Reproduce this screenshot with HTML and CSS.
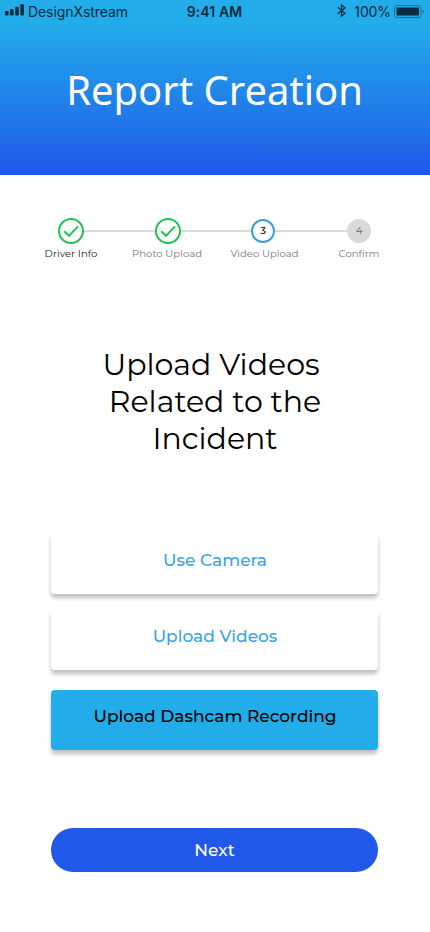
FILE: index.html
```html
<!DOCTYPE html>
<html lang="en">
<head>
<meta charset="utf-8">
<meta name="viewport" content="width=device-width, initial-scale=1">
<title>Report Creation</title>
<link rel="stylesheet" href="styles.css">
</head>
<body>
<header class="hero">
  <div class="status">
    <div class="status-left">
      <svg class="signal" width="20" height="12" viewBox="0 0 20 12"><rect x="0" y="7" width="3.6" height="4.5" rx="1"/><rect x="5" y="5" width="3.6" height="6.5" rx="1"/><rect x="10.2" y="2.8" width="3.6" height="8.7" rx="1"/><rect x="15.4" y="0.3" width="3.6" height="11.2" rx="1"/></svg>
      <span class="carrier">DesignXstream</span>
    </div>
    <span class="clock">9:41 AM</span>
    <div class="status-right">
      <svg class="bluetooth" width="9" height="13" viewBox="0 0 9 13"><path d="M.8 3.3 8 9.3 4.5 12V1L8 3.7.8 9.7"/></svg>
      <span class="percent">100%</span>
      <svg class="battery" width="31" height="13" viewBox="0 0 31 13"><rect class="battery-shell" x=".5" y=".5" width="26.5" height="12" rx="2.5"/><rect x="2.5" y="2.5" width="22.5" height="8" rx=".8"/><path class="battery-tip" d="M28.6 4.5q2.4 2 0 4z"/></svg>
    </div>
  </div>
  <h1 class="title">Report Creation</h1>
</header>
<main class="content">
  <ol class="steps">
    <li class="step current-label"><svg class="check" width="26" height="26" viewBox="0 0 26 26"><circle cx="13" cy="13" r="12"/><path d="m6.2 13.3 4.8 4.5 9-9.4"/></svg><span class="label">Driver Info</span></li>
    <li class="step"><svg class="check check-2" width="26" height="26" viewBox="0 0 26 26"><circle cx="13" cy="13" r="12"/><path d="m6.2 13.3 4.8 4.5 9-9.4"/></svg><span class="label">Photo Upload</span></li>
    <li class="step"><span class="dot active">3</span><span class="label label-3">Video Upload</span></li>
    <li class="step"><span class="dot">4</span><span class="label">Confirm</span></li>
  </ol>
  <h2 class="heading"><span class="line line-1">Upload Videos</span><span class="line">Related to the</span><span class="line">Incident</span></h2>
  <div class="actions">
    <button class="card">Use Camera</button>
    <button class="card">Upload Videos</button>
    <button class="card selected">Upload Dashcam Recording</button>
  </div>
  <button class="next">Next</button>
</main>
</body>
</html>
```
FILE: styles.css
```css
* { box-sizing: border-box; }
body { margin: 0; background: #fff; font-family: Montserrat, Inter, sans-serif; color: #000; }
button { border: 0; padding: 0; font: inherit; }
.hero { height: 175px; background: linear-gradient(#22adea 0, #22adea 12%, #2058e9 100%); }
.status { height: 22px; display: grid; grid-template-columns: 1fr auto 1fr; align-items: center; padding: 1px 5px 0; font: 14px/20px Inter, sans-serif; color: #092b3b; }
.status svg { display: block; fill: currentColor; }
.status-left, .status-right { display: flex; align-items: center; }
.status-left { gap: 3px; }
.carrier { letter-spacing: -.08px; }
.status-right { justify-content: flex-end; }
.signal { margin-top: -4px; }
.clock { font-weight: 600; letter-spacing: .1px; margin-right: 1px; }
.status .bluetooth { fill: none; stroke: currentColor; stroke-width: 1.3; margin: -3px 8px 0 0; }
.percent { margin-right: 3px; letter-spacing: -.1px; }
.status .battery { margin-top: -1px; }
.status .battery-shell { fill: none; stroke: currentColor; opacity: .45; }
.battery-tip { opacity: .45; }
.title { margin: 0; padding: 41px 1px 0 0; text-align: center; font: 400 40px/54px "Noto Sans", sans-serif; letter-spacing: -.04px; color: #fff; }
.content { display: flex; flex-direction: column; align-items: center; }
.steps { list-style: none; margin: 43px 0 0; padding: 0; width: 384px; display: grid; grid-template-columns: repeat(4, 1fr); }
.step { position: relative; display: flex; flex-direction: column; align-items: center; height: 45px; color: #777; }
.step:not(:last-child)::after { content: ""; position: absolute; left: calc(50% + 12px); top: 12px; width: calc(100% - 24px); height: 2px; background: #dadada; }
.current-label { color: #222; }
.check { position: relative; z-index: 1; fill: none; stroke: #21c153; stroke-width: 2; }
.check circle { fill: #fff; }
.check-2 { margin-left: 2px; }
.dot { width: 24px; height: 24px; margin: 1px 0; border-radius: 50%; background: #d9d9d9; font-size: 10px; font-weight: 500; line-height: 24px; text-align: center; }
.dot.active { background: #fff; border: 2px solid #3aa0dc; line-height: 20px; color: #000; }
.label { margin-top: 3px; font-size: 10px; line-height: 13px; letter-spacing: .06px; white-space: nowrap; }
.label-3 { margin-left: 3px; }
.heading { margin: 83px 0 0; font-weight: 400; font-size: 30px; line-height: 37px; text-align: center; }
.line { display: block; white-space: nowrap; }
.line-1 { margin-right: 8px; }
.actions { width: 327px; margin: 77px 1px 0 0; display: flex; flex-direction: column; gap: 16px; }
.card { height: 60px; padding: 0 0 8px 1px; border-radius: 4px; background: #fff; color: #3da3df; box-shadow: 0 4px 4px rgba(0,0,0,.25); font-size: 17px; font-weight: 500; }
.card.selected { margin-top: 4px; background: #22adea; color: #000; }
.next { width: 327px; height: 44px; margin: 78px 1px 0 0; border-radius: 22px; background: #2058e9; color: #fff; font-size: 17px; font-weight: 500; }
```
